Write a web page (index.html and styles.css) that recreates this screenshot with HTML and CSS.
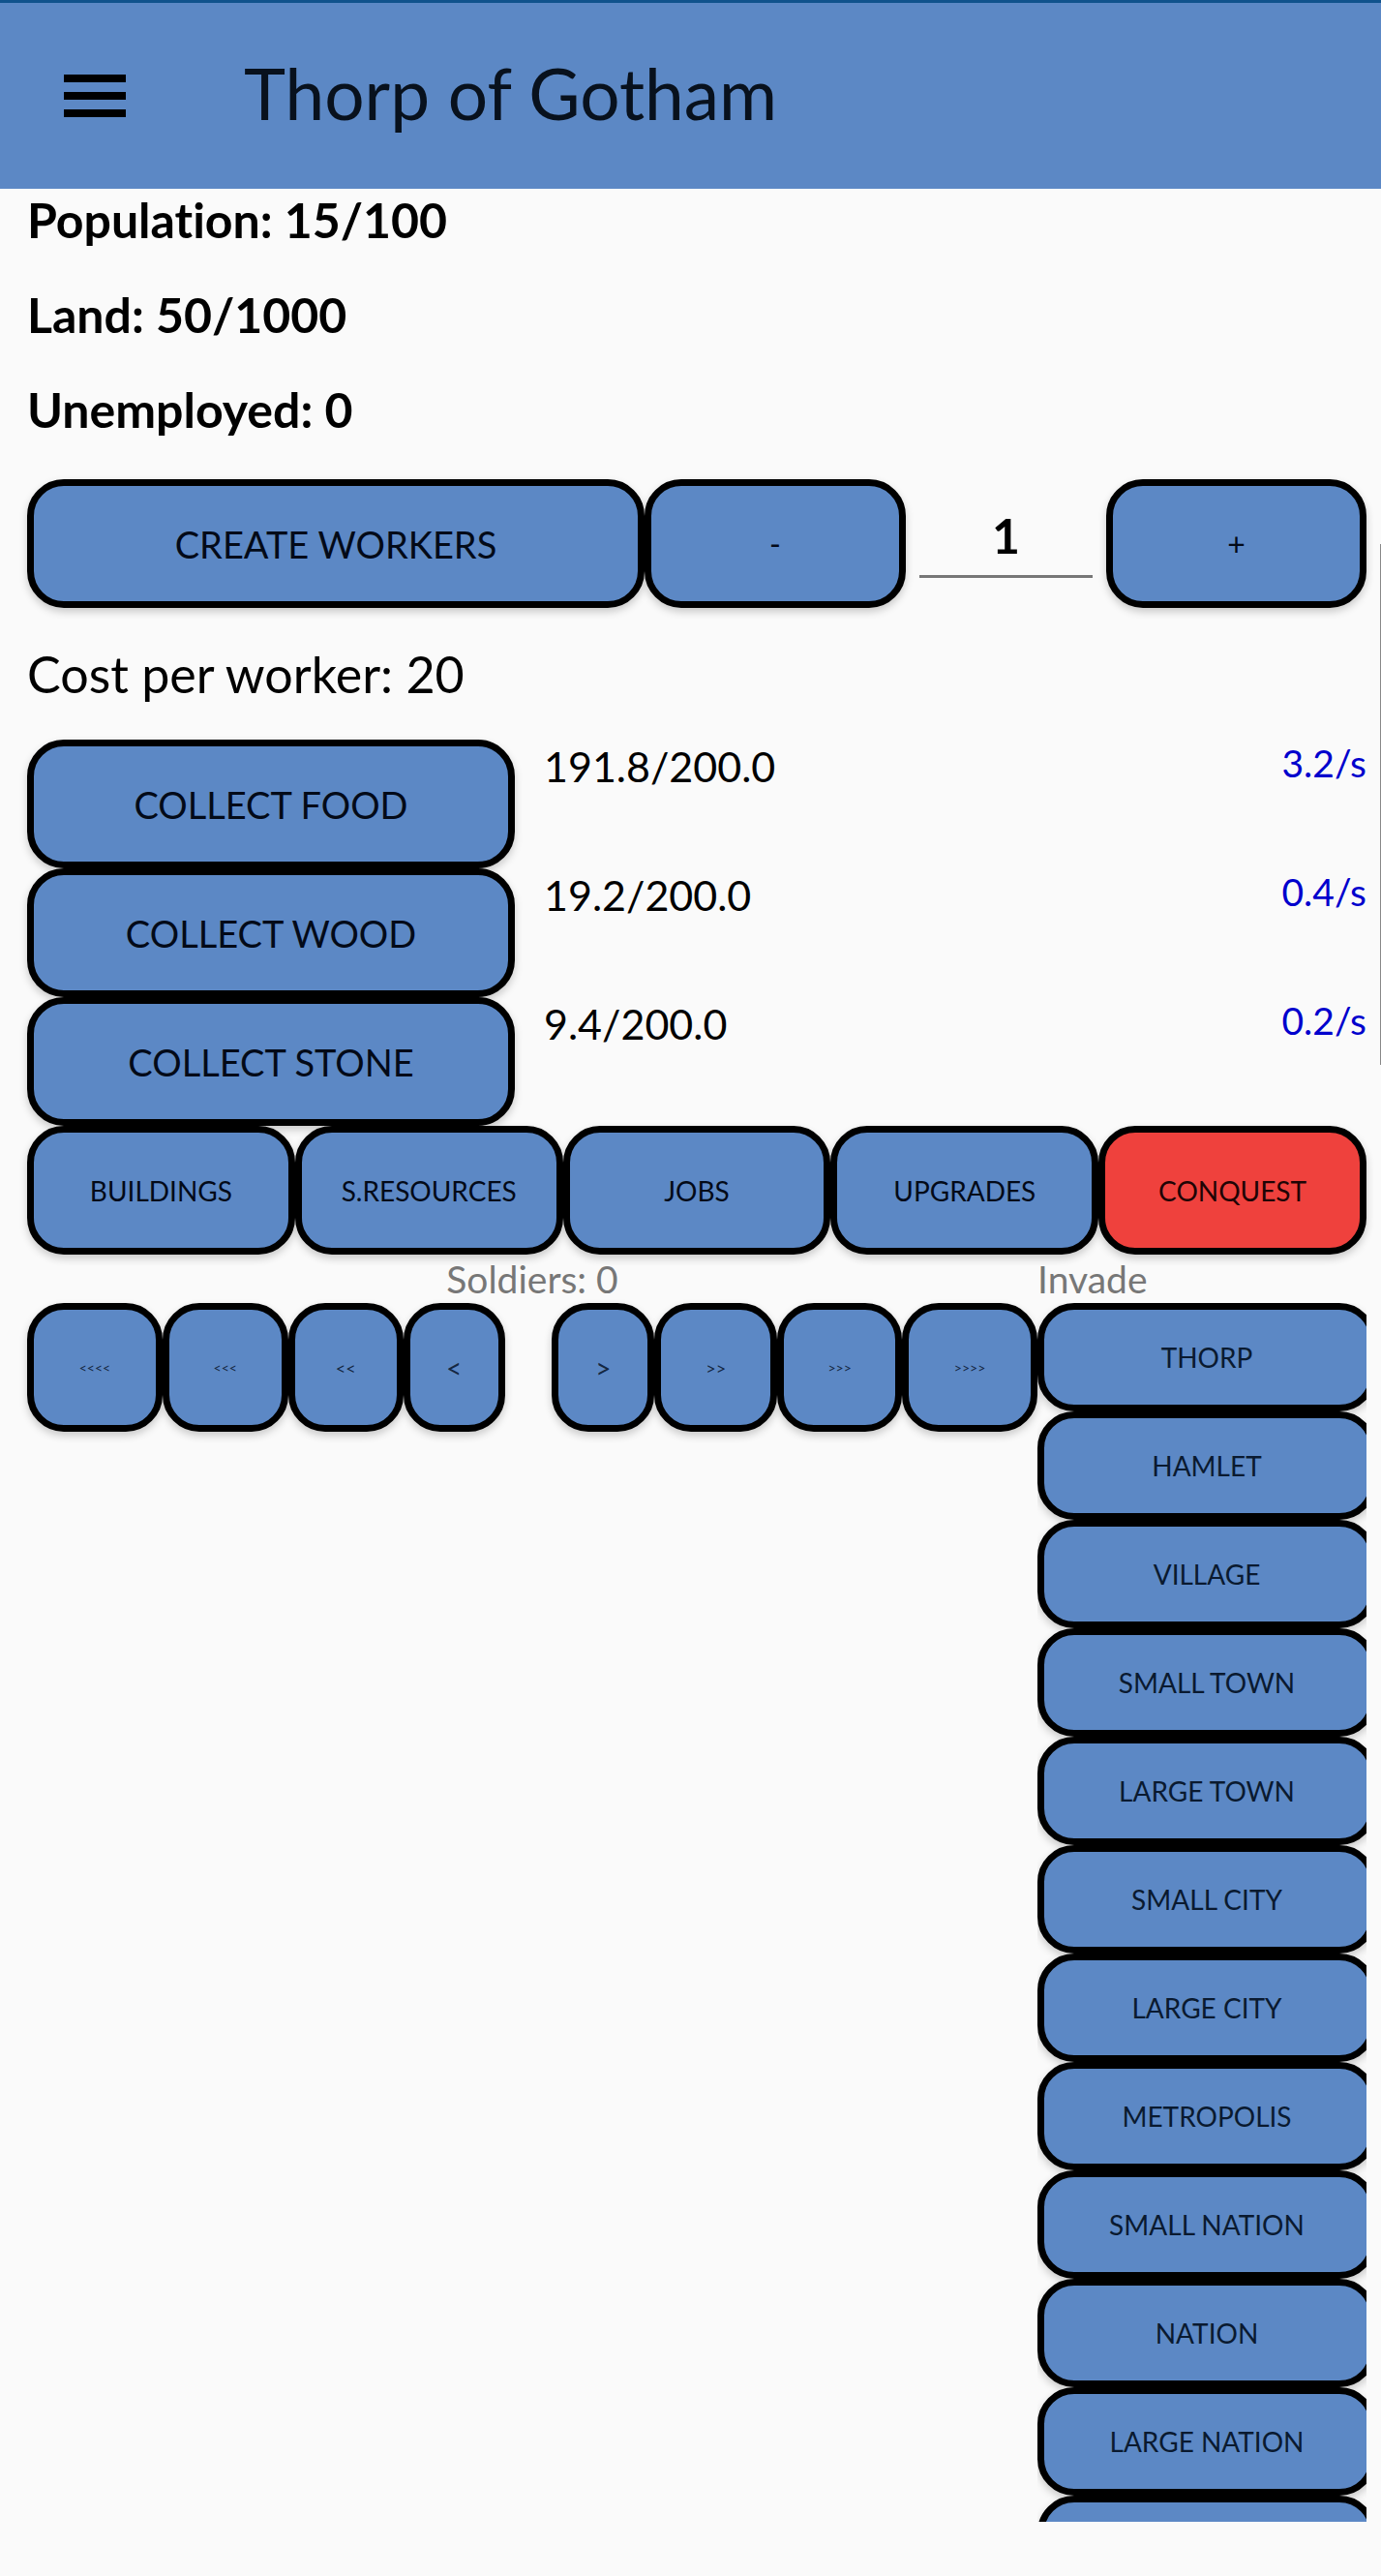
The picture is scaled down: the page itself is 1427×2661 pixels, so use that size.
FILE: index.html
```html
<!DOCTYPE html>
<html lang="en">
<head>
<meta charset="utf-8">
<meta name="viewport" content="width=device-width, initial-scale=1">
<title>Thorp of Gotham</title>
<link rel="stylesheet" href="styles.css">
</head>
<body>
<header class="app-bar">
  <button class="menu" type="button" aria-label="Open menu">
    <svg width="64" height="44" viewBox="0 0 64 44" aria-hidden="true"><path d="M0 0h64v8H0zM0 18h64v8H0zM0 36h64v8H0z"/></svg>
  </button>
  <h1 class="title">Thorp of Gotham</h1>
</header>
<main class="content">
  <section class="stats">
    <p class="stat">Population: 15/100</p>
    <p class="stat">Land: 50/1000</p>
    <p class="stat">Unemployed: 0</p>
  </section>
  <form class="workers">
    <button class="btn large" type="button">CREATE WORKERS</button>
    <button class="btn step" type="button" aria-label="Fewer workers">-</button>
    <input class="amount" type="text" inputmode="numeric" value="1" aria-label="Number of workers">
    <button class="btn step" type="button" aria-label="More workers">+</button>
  </form>
  <p class="cost">Cost per worker: 20</p>
  <section class="resources">
    <div class="resource">
      <button class="btn large" type="button">COLLECT FOOD</button>
      <span class="stock">191.8/200.0</span>
      <span class="rate">3.2/s</span>
    </div>
    <div class="resource">
      <button class="btn large" type="button">COLLECT WOOD</button>
      <span class="stock">19.2/200.0</span>
      <span class="rate">0.4/s</span>
    </div>
    <div class="resource">
      <button class="btn large" type="button">COLLECT STONE</button>
      <span class="stock">9.4/200.0</span>
      <span class="rate">0.2/s</span>
    </div>
  </section>
  <nav class="tabs">
    <button class="btn" type="button">BUILDINGS</button>
    <button class="btn" type="button">S.RESOURCES</button>
    <button class="btn" type="button">JOBS</button>
    <button class="btn" type="button">UPGRADES</button>
    <button class="btn active" type="button">CONQUEST</button>
  </nav>
  <div class="conquest">
    <section class="army">
      <h2 class="caption centered">Soldiers: 0</h2>
      <div class="arrows">
        <button class="btn tiny" type="button">&lt;&lt;&lt;&lt;</button>
        <button class="btn tiny" type="button">&lt;&lt;&lt;</button>
        <button class="btn small" type="button">&lt;&lt;</button>
        <button class="btn" type="button">&lt;</button>
        <span class="spacer"></span>
        <button class="btn" type="button">&gt;</button>
        <button class="btn small" type="button">&gt;&gt;</button>
        <button class="btn tiny" type="button">&gt;&gt;&gt;</button>
        <button class="btn tiny" type="button">&gt;&gt;&gt;&gt;</button>
      </div>
    </section>
    <section class="invade">
      <h2 class="caption">Invade</h2>
      <div class="targets">
        <button class="btn" type="button">THORP</button>
        <button class="btn" type="button">HAMLET</button>
        <button class="btn" type="button">VILLAGE</button>
        <button class="btn" type="button">SMALL TOWN</button>
        <button class="btn" type="button">LARGE TOWN</button>
        <button class="btn" type="button">SMALL CITY</button>
        <button class="btn" type="button">LARGE CITY</button>
        <button class="btn" type="button">METROPOLIS</button>
        <button class="btn" type="button">SMALL NATION</button>
        <button class="btn" type="button">NATION</button>
        <button class="btn" type="button">LARGE NATION</button>
        <button class="btn" type="button" aria-label="Next target"></button>
      </div>
    </section>
  </div>
</main>
<div class="scrollbar"></div>
</body>
</html>
```
FILE: styles.css
```css
* { box-sizing: border-box; }

body {
  position: relative;
  display: flex;
  flex-direction: column;
  height: 100vh;
  margin: 0;
  overflow: hidden;
  background: #fafafa;
  color: #000;
  font-family: Lato, "Open Sans", sans-serif;
  font-variant-ligatures: none;
}

h1, h2, p { margin: 0; font-weight: 400; }

.app-bar {
  display: flex;
  flex: none;
  align-items: center;
  gap: 122px;
  height: 195px;
  padding-left: 66px;
  border-top: 3px solid #10528c;
  background: #5c88c5;
}

.menu {
  display: flex;
  padding: 0;
  border: 0;
  background: none;
}

.title {
  padding-bottom: 6px;
  color: #08111d;
  font-size: 73px;
  line-height: 88px;
}

.content {
  display: flex;
  flex: 1;
  flex-direction: column;
  min-height: 0;
  padding: 0 15px 56px 28px;
}

.stat {
  height: 98px;
  font-size: 50px;
  font-weight: 700;
  line-height: 64px;
}

.btn {
  height: 133px;
  min-width: 0;
  padding: 0;
  border: 7px solid #000;
  border-radius: 38px;
  background: #5c88c5;
  box-shadow: 0 4px 8px rgba(0, 0, 0, 0.2);
  color: #030a18;
  font: 400 28px/34px Lato, "Open Sans", sans-serif;
  white-space: nowrap;
}

.btn.large { font-size: 38px; line-height: 48px; }
.btn.step { font-size: 32px; }
.btn.small { font-size: 18px; }
.btn.tiny { font-size: 14px; }
.btn.active { background: #ef413d; color: #200405; }

.workers {
  display: grid;
  flex: none;
  grid-template-columns: 638fr 270fr 207fr 269fr;
  padding-top: 6px;
}

.amount {
  min-width: 0;
  height: 102px;
  margin: 0 14px;
  padding: 16px 0 0;
  border: 0;
  border-bottom: 3px solid #777;
  background: none;
  color: #000;
  font: 700 50px/60px Lato, "Open Sans", sans-serif;
  text-align: center;
}

.cost {
  padding: 36px 0;
  font-size: 52px;
  line-height: 64px;
}

.resource {
  display: grid;
  grid-template-columns: 504fr 440fr 440fr;
}

.stock {
  padding: 2px 0 0 30px;
  font-size: 43px;
  line-height: 52px;
}

.rate {
  color: #0000cd;
  font-size: 39px;
  line-height: 48px;
  text-align: right;
}

.tabs {
  display: grid;
  grid-template-columns: repeat(5, 1fr);
}

.conquest {
  display: grid;
  flex: 1;
  grid-template-columns: 1044fr 340fr;
  grid-template-rows: minmax(0, 1fr);
  min-height: 0;
}

.army { min-width: 0; }

.invade {
  display: flex;
  flex-direction: column;
  min-width: 0;
}

.caption {
  flex: none;
  height: 50px;
  color: #777;
  font-size: 39px;
  line-height: 50px;
}

.centered { text-align: center; }

.arrows {
  display: grid;
  grid-template-columns: 140fr 130fr 119fr 105fr 49fr 106fr 127fr 129fr 140fr;
}

.arrows .btn { color: #142742; }

.targets {
  flex: 1;
  min-height: 0;
  overflow: hidden;
}

.targets .btn {
  display: block;
  width: calc(100% + 10px);
  height: 112px;
  color: #0a1a30;
}

.scrollbar {
  position: absolute;
  top: 562px;
  right: 0;
  width: 1px;
  height: 538px;
  background: #888;
}
```
